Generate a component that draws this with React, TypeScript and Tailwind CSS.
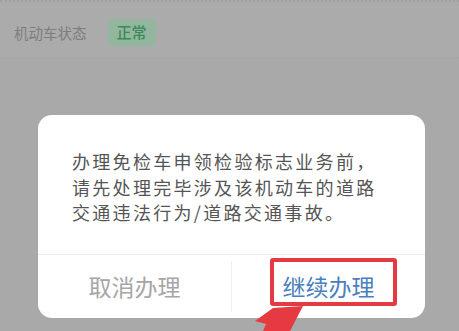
export default function App() {
  return (
    <div className="relative flex h-[331px] w-[459px] flex-col overflow-hidden bg-[#a9a9a9] font-['Noto_Sans_CJK_SC',sans-serif]">
      <div className="flex h-[58px] items-center gap-[21px] border-t-2 border-dotted border-[#a0a0a0] border-b border-b-[#a3a3a3] bg-[#ababab] pl-[14px] pt-[6px]">
        <span className="text-[14.5px] text-[#7d7d7d]">机动车状态</span>
        <span className="rounded-[5px] bg-[#92b79e] px-[9px] py-[2px] text-[15px] font-medium text-[#3a8a5a]">正常</span>
      </div>

      <div className="relative ml-[38px] mt-[57px] flex h-[203px] w-[387px] flex-col rounded-[14px] bg-white">
        <p className="px-[34px] pt-[34px] text-[18px] leading-[25.5px] tracking-[2.3px] text-[#555555]">
          办理免检车申领检验标志业务前，
          <br />
          请先处理完毕涉及该机动车的道路
          <br />
          交通违法行为/道路交通事故。
        </p>
        <div className="mt-auto flex h-[64px] border-t border-[#ececec]">
          <button type="button" className="flex flex-1 items-center justify-center text-[23px] text-[#a6a6a6]">
            取消办理
          </button>
          <div className="my-[6px] w-px bg-[#f0f0f0]" />
          <button type="button" className="flex flex-1 items-center justify-center text-[23px] text-[#4a7fc0]">
            继续办理
          </button>
        </div>
        <div className="absolute left-[232px] top-[143px] h-[48px] w-[127px] rounded-[3px] border-[4px] border-[#e63a42]" />
      </div>

      <svg className="absolute left-[250px] top-[304px]" width="70" height="30" viewBox="0 0 70 30">
        <polygon points="23,4 53,2 40,27 13,27 16,20 5,17" fill="#e63a42" />
      </svg>
    </div>
  );
}
